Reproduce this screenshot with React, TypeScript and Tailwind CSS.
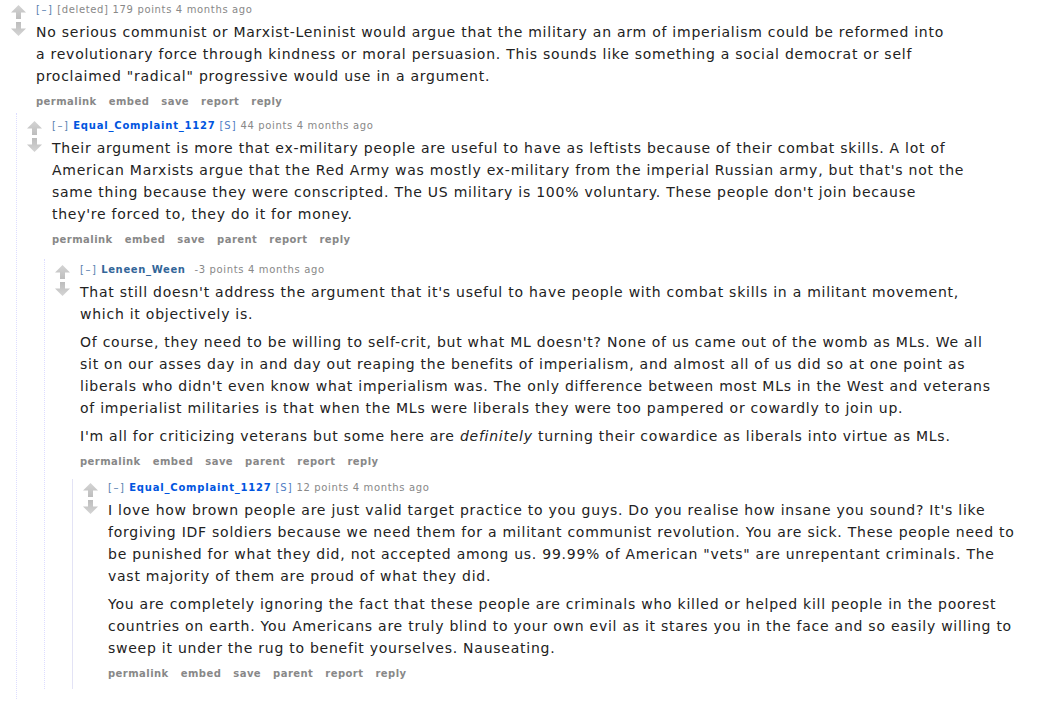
import type { ReactNode } from "react";

type Comment = {
  author: string;
  kind: "deleted" | "op" | "user";
  score: string;
  paragraphs: ReactNode[][];
  parent: boolean;
};

const Arrow = ({ down = false }: { down?: boolean }) => (
  <svg width="15" height="14" viewBox="0 0 15 14" className={down ? "rotate-180" : ""}>
    <defs>
      <linearGradient id={down ? "gd" : "gu"} x1="0" y1="0" x2="0" y2="1">
        <stop offset="0" stopColor="#d4d4d4" />
        <stop offset="1" stopColor="#bdbdbd" />
      </linearGradient>
    </defs>
    <path d="M7.5 0 L15 7.5 L10 7.5 L10 14 L5 14 L5 7.5 L0 7.5 Z" fill={`url(#${down ? "gd" : "gu"})`} />
  </svg>
);

const Tagline = ({ c }: { c: Comment }) => (
  <div className="text-[10px] leading-[14px] tracking-[0.65px] text-[#888] whitespace-nowrap">
    <span className="text-[#5a7fb0] tracking-[1.5px]">[–]</span>{" "}
    {c.kind === "deleted" && <span className="text-[#888]">[deleted]</span>}
    {c.kind === "op" && (
      <>
        <span className="font-bold text-[#0055df] tracking-[0.8px]">{c.author}</span>{" "}
        <span className="text-[#4f7cc4] tracking-[1px]">[S]</span>
      </>
    )}
    {c.kind === "user" && <span className="font-bold text-[#369] mr-[5px]">{c.author}</span>}{" "}
    {c.score} points 4 months ago
  </div>
);

const Buttons = ({ parent }: { parent: boolean }) => (
  <div className="flex gap-[12px] text-[10px] leading-[14px] tracking-[0.45px] font-bold text-[#888]">
    <span>permalink</span>
    <span>embed</span>
    <span>save</span>
    {parent && <span>parent</span>}
    <span>report</span>
    <span>reply</span>
  </div>
);

const Entry = ({ c }: { c: Comment }) => (
  <div className="flex">
    <div className="flex flex-col gap-[3px] w-[15px] mt-[2px] mr-[10px] shrink-0">
      <Arrow />
      <Arrow down />
    </div>
    <div className="flex flex-col">
      <Tagline c={c} />
      <div className="mt-[4px] text-[14px] leading-[22px] tracking-[0.75px] text-[#222] whitespace-nowrap flex flex-col gap-[6px]">
        {c.paragraphs.map((p, i) => (
          <p key={i}>
            {p.map((line, j) => (
              <span key={j} className="block">
                {line}
              </span>
            ))}
          </p>
        ))}
      </div>
      <div className="mt-[8px]">
        <Buttons parent={c.parent} />
      </div>
    </div>
  </div>
);

const comments: Comment[] = [
  {
    author: "[deleted]",
    kind: "deleted",
    score: "179",
    parent: false,
    paragraphs: [
      [
        "No serious communist or Marxist-Leninist would argue that the military an arm of imperialism could be reformed into",
        "a revolutionary force through kindness or moral persuasion. This sounds like something a social democrat or self",
        'proclaimed "radical" progressive would use in a argument.',
      ],
    ],
  },
  {
    author: "Equal_Complaint_1127",
    kind: "op",
    score: "44",
    parent: true,
    paragraphs: [
      [
        "Their argument is more that ex-military people are useful to have as leftists because of their combat skills. A lot of",
        "American Marxists argue that the Red Army was mostly ex-military from the imperial Russian army, but that's not the",
        "same thing because they were conscripted. The US military is 100% voluntary. These people don't join because",
        "they're forced to, they do it for money.",
      ],
    ],
  },
  {
    author: "Leneen_Ween",
    kind: "user",
    score: "-3",
    parent: true,
    paragraphs: [
      [
        "That still doesn't address the argument that it's useful to have people with combat skills in a militant movement,",
        "which it objectively is.",
      ],
      [
        "Of course, they need to be willing to self-crit, but what ML doesn't? None of us came out of the womb as MLs. We all",
        "sit on our asses day in and day out reaping the benefits of imperialism, and almost all of us did so at one point as",
        "liberals who didn't even know what imperialism was. The only difference between most MLs in the West and veterans",
        "of imperialist militaries is that when the MLs were liberals they were too pampered or cowardly to join up.",
      ],
      [
        <>
          I'm all for criticizing veterans but some here are <em>definitely</em> turning their cowardice as liberals into
          virtue as MLs.
        </>,
      ],
    ],
  },
  {
    author: "Equal_Complaint_1127",
    kind: "op",
    score: "12",
    parent: true,
    paragraphs: [
      [
        "I love how brown people are just valid target practice to you guys. Do you realise how insane you sound? It's like",
        "forgiving IDF soldiers because we need them for a militant communist revolution. You are sick. These people need to",
        'be punished for what they did, not accepted among us. 99.99% of American "vets" are unrepentant criminals. The',
        "vast majority of them are proud of what they did.",
      ],
      [
        "You are completely ignoring the fact that these people are criminals who killed or helped kill people in the poorest",
        "countries on earth. You Americans are truly blind to your own evil as it stares you in the face and so easily willing to",
        "sweep it under the rug to benefit yourselves. Nauseating.",
      ],
    ],
  },
];

export default function App() {
  const [c1, c2, c3, c4] = comments;
  return (
    <div className="w-[1061px] h-[706px] bg-white overflow-hidden font-['DejaVu_Sans',Verdana,sans-serif]">
      <div className="pt-[3px] pl-[11px]">
        <Entry c={c1} />
      </div>
      <div className="ml-[16px] mt-[4px] border-l border-dotted border-[#ddf] pl-[10px] pt-[6px] pb-[10px]">
        <Entry c={c2} />
        <div className="ml-[17px] mt-[12px] border-l border-dotted border-[#ddf] pl-[10px] pt-[4px]">
          <Entry c={c3} />
          <div className="ml-[17px] mt-[10px] border-l border-[#e3e3f5] pl-[10px] pt-[2px]">
            <Entry c={c4} />
            <div className="h-[8px]" />
          </div>
        </div>
      </div>
    </div>
  );
}
